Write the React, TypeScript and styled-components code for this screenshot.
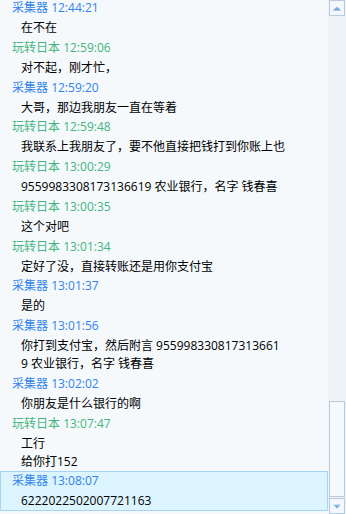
import React from "react";
import styled, { createGlobalStyle } from "styled-components";

const Global = createGlobalStyle`
  html, body { margin: 0; padding: 0; }
  body {
    width: 346px;
    height: 514px;
    overflow: hidden;
    background: #f5f9fc;
    font-family: "Open Sans", "Noto Sans CJK SC", sans-serif;
    font-size: 12px;
  }
`;

type Sender = "a" | "b";

interface Entry {
  sender: Sender;
  time: string;
  lines: string[];
  active?: boolean;
}

const names: Record<Sender, string> = { a: "采集器", b: "玩转日本" };

const entries: Entry[] = [
  { sender: "a", time: "12:44:21", lines: ["在不在"] },
  { sender: "b", time: "12:59:06", lines: ["对不起，刚才忙，"] },
  { sender: "a", time: "12:59:20", lines: ["大哥，那边我朋友一直在等着"] },
  { sender: "b", time: "12:59:48", lines: ["我联系上我朋友了，要不他直接把钱打到你账上也"] },
  { sender: "b", time: "13:00:29", lines: ["9559983308173136619 农业银行，名字 钱春喜"] },
  { sender: "b", time: "13:00:35", lines: ["这个对吧"] },
  { sender: "b", time: "13:01:34", lines: ["定好了没，直接转账还是用你支付宝"] },
  { sender: "a", time: "13:01:37", lines: ["是的"] },
  {
    sender: "a",
    time: "13:01:56",
    lines: ["你打到支付宝，然后附言 955998330817313661", "9 农业银行，名字 钱春喜"],
  },
  { sender: "a", time: "13:02:02", lines: ["你朋友是什么银行的啊"] },
  { sender: "b", time: "13:07:47", lines: ["工行", "给你打152"] },
  { sender: "a", time: "13:08:07", lines: ["6222022502007721163"], active: true },
];

const Window = styled.div`
  display: flex;
  width: 346px;
  height: 514px;
  overflow: hidden;
`;

const Content = styled.div`
  flex: 1;
  overflow: hidden;
`;

const List = styled.div`
  margin-top: -2px;
  display: flex;
  flex-direction: column;
`;

const Item = styled.div<{ $active?: boolean }>`
  padding-bottom: 0.75px;
  background: ${(p) => (p.$active ? "#dbf4fe" : "transparent")};
  box-shadow: ${(p) => (p.$active ? "inset 0 0 0 1px #a6d4f2" : "none")};
`;

const Header = styled.div<{ $sender: Sender }>`
  height: 20px;
  line-height: 20px;
  padding-left: 12px;
  color: ${(p) => (p.$sender === "a" ? "#3082ee" : "#43b67e")};
  white-space: nowrap;
`;

const Body = styled.div`
  padding-top: 1px;
  padding-left: 21px;
  color: #000;
`;

const Line = styled.div`
  height: 18px;
  line-height: 18px;
  white-space: nowrap;
`;

const ScrollBar = styled.div`
  width: 18px;
  box-sizing: border-box;
  padding-left: 1px;
  padding-right: 1px;
  background: #eef3f8;
  display: flex;
  flex-direction: column;
`;

const ArrowButton = styled.div`
  height: 16px;
  box-sizing: border-box;
  border: 1px solid #b8cadc;
  background: #f4f8fc;
  display: flex;
  align-items: center;
  justify-content: center;
`;

const Track = styled.div`
  flex: 1;
  display: flex;
  flex-direction: column;
  justify-content: flex-end;
  padding-bottom: 1px;
`;

const Thumb = styled.div`
  height: 96px;
  box-sizing: border-box;
  border: 1px solid #b8cadc;
  background: #f5f9fc;
`;

const Arrow = ({ up }: { up?: boolean }) => (
  <svg width="8" height="5" viewBox="0 0 8 5">
    <defs>
      <linearGradient id={up ? "gu" : "gd"} x1="0" y1="0" x2="0" y2="1">
        <stop offset="0" stopColor="#9cc6ee" />
        <stop offset="1" stopColor="#5b9ad8" />
      </linearGradient>
    </defs>
    {up ? (
      <polygon points="4,0.5 8,4.5 0,4.5" fill="url(#gu)" />
    ) : (
      <polygon points="0,0.5 8,0.5 4,4.5" fill="url(#gd)" />
    )}
  </svg>
);

export default function App() {
  return (
    <>
      <Global />
      <Window>
        <Content>
          <List>
            {entries.map((e, i) => (
              <Item key={i} $active={e.active}>
                <Header $sender={e.sender}>
                  {names[e.sender]} {e.time}
                </Header>
                <Body>
                  {e.lines.map((l, j) => (
                    <Line key={j}>{l}</Line>
                  ))}
                </Body>
              </Item>
            ))}
          </List>
        </Content>
        <ScrollBar>
          <ArrowButton>
            <Arrow up />
          </ArrowButton>
          <Track>
            <Thumb />
          </Track>
          <ArrowButton>
            <Arrow />
          </ArrowButton>
        </ScrollBar>
      </Window>
    </>
  );
}
